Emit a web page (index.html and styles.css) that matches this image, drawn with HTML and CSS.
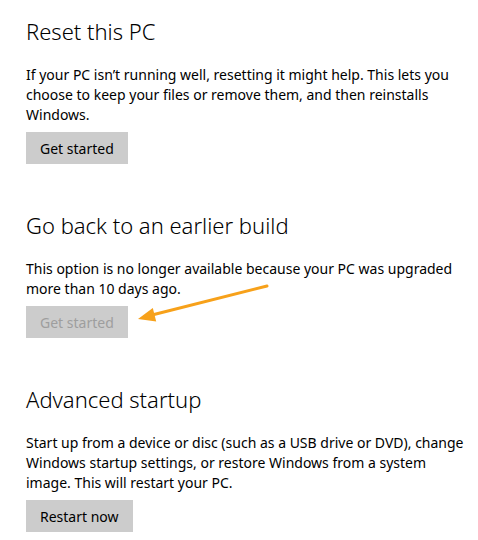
FILE: index.html
```html
<!DOCTYPE html>
<html lang="en">
<head>
    <meta charset="UTF-8">
    <meta name="viewport" content="width=device-width, initial-scale=1.0">
    <title>Recovery</title>
    <link rel="stylesheet" href="styles.css">
</head>
<body>
    <div class="page">
        <section class="option">
            <h2>Reset this PC</h2>
            <p>If your PC isn’t running well, resetting it might help. This lets you<br>
               choose to keep your files or remove them, and then reinstalls<br>
               Windows.</p>
            <button type="button">Get started</button>
        </section>

        <section class="option">
            <h2>Go back to an earlier build</h2>
            <p>This option is no longer available because your PC was upgraded<br>
               more than 10 days ago.</p>
            <button type="button" disabled>Get started</button>
        </section>

        <section class="option">
            <h2>Advanced startup</h2>
            <p>Start up from a device or disc (such as a USB drive or DVD), change<br>
               Windows startup settings, or restore Windows from a system<br>
               image. This will restart your PC.</p>
            <button type="button">Restart now</button>
        </section>

        <svg class="arrow" width="145" height="50" viewBox="0 0 145 50">
            <line x1="137" y1="6" x2="22" y2="35" stroke="#f7a11a" stroke-width="3" stroke-linecap="round"/>
            <polygon points="8,39 22.8,28 26.2,41.6" fill="#f7a11a"/>
        </svg>
    </div>
</body>
</html>
```

FILE: styles.css
```css
body {
    font-family: "Noto Sans", "Open Sans", sans-serif;
    margin: 0;
    background-color: #ffffff;
    color: #000000;
}
.page {
    position: relative;
    padding: 15px 0 0 26px;
}
.option {
    display: flex;
    flex-direction: column;
    align-items: flex-start;
    margin-bottom: 45px;
}
.option:last-of-type {
    margin-bottom: 0;
}
h2 {
    font-size: 22px;
    font-weight: 300;
    line-height: 32px;
    margin: 0 0 18px 0;
    white-space: nowrap;
}
p {
    font-size: 14px;
    line-height: 20px;
    margin: 0 0 7px 0;
    white-space: nowrap;
}
button {
    font-family: inherit;
    font-size: 14px;
    height: 32px;
    padding: 0 14px;
    background-color: #cccccc;
    border: none;
    color: #000000;
}
button:disabled {
    color: #9e9e9e;
}
.arrow {
    position: absolute;
    left: 130px;
    top: 280px;
}
```
